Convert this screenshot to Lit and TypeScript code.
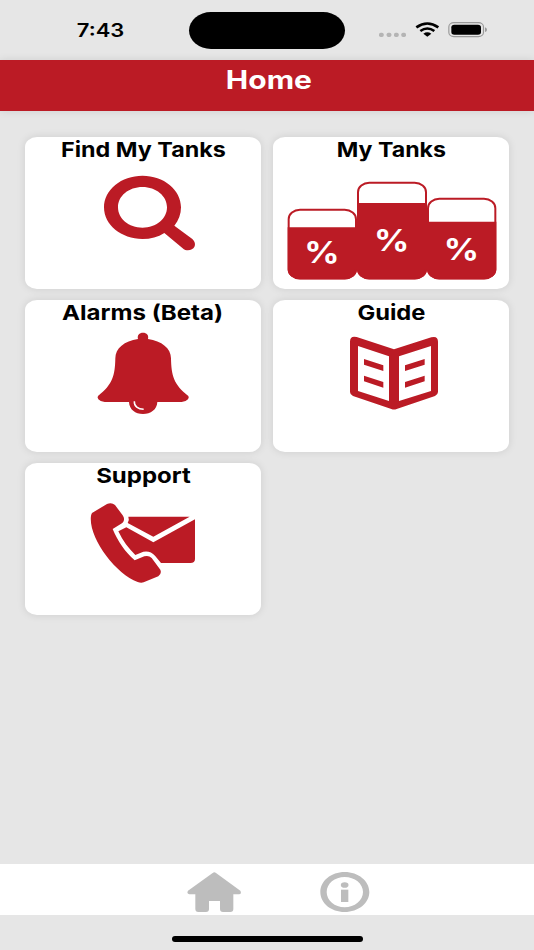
import { LitElement, html, css, svg } from "lit";
import { customElement, property } from "lit/decorators.js";

const RED = "#bb1b25";

const searchIcon = svg`
  <path fill=${RED} fill-rule="evenodd" d="M382.500 152C446 152 498 194 498 247C498 267 491 286 478 302L532 342C551 360 533 381 511 375Q506 373 503 370L448 324C429 336 407 342 382.500 342C319 342 267 300 267 247S319 152 382.500 152ZM382.500 186C341 186 309 213 309 247S341 308 382.500 308S456 281 456 247S423 186 382.500 186Z"/>`;

const tank = (x: number, y: number, w: number, level: number, textY: number) => svg`
  <path fill=${RED} d="M${x} ${level}H${x + w}V434A36 30 0 0 1 ${x + w - 36} 463H${x + 36}A36 30 0 0 1 ${x} 434Z"/>
  <rect x=${x + 3} y=${y + 2.5} width=${w - 6} height=${458 - y} rx="34" ry="28" fill="none" stroke=${RED} stroke-width="6"/>
  <text x=${x + w / 2 - 1} y=${textY} text-anchor="middle" textLength="106" lengthAdjust="spacingAndGlyphs"
    font-family="Inter, sans-serif" font-weight="700" font-size="88" fill="#fff">%</text>`;

const tanksIcon = svg`${tank(68, 252, 208, 307, 413)}${tank(276, 171, 210, 234, 377)}${tank(486, 219, 208, 290, 405)}`;

const bellIcon = svg`
  <path fill=${RED} d="M369 132C366 120 373 113 384 113S402 120 399 132C440 138 468 160 468 190C469 241 476 269 520 303Q523 307 519 313Q512 321 500 321H427C426 344 407 357 384 357S343 344 342 321H269Q257 321 250 313Q246 307 249 303C293 269 300 241 301 190C301 160 328 138 369 132Z"/>
  <path d="M358 319C357 334 369 343 386 343" fill="none" stroke="#fff" stroke-width="4.500"/>`;

const bookIcon = svg`
  <path fill=${RED} fill-rule="evenodd" d="M275 126L387 163L499 127Q519 122 519 140V291Q519 298 510 303L395 342Q387 345 379 342L264 303Q255 299 255 291V140Q255 121 275 126ZM279 153V288L372 318V184ZM498 153L402 184V318L498 288Z"/>
  <path fill=${RED} d="M297 192L355 211V228L297 209ZM297 242L355 261V278L297 259ZM479 192L420 211V228L479 209ZM479 242L420 261V278L479 259Z"/>`;

const supportIcon = svg`
  <path fill=${RED} d="M340 185H524L415 245L338 204Q344 195 340 185ZM310 229L334 217L415 262L540 193V312Q540 324 526 324H438L420 302Q406 286 385 290L361 300C341 281 323 257 310 229Z"/>
  <path fill=${RED} d="M231 174L276 147Q290 141 300 150L323 181Q332 194 322 204L293 222C308 258 330 291 359 316L388 304Q401 300 410 309L436 344Q441 356 430 364L386 382Q378 385 368 381C301 357 219 247 228 182Q229 177 231 174Z"/>`;

@customElement("menu-card")
class MenuCard extends LitElement {
  @property() label = "";
  @property({ type: Number }) stretch = 1.2;
  @property() view = "";
  @property({ attribute: false }) icon: unknown;

  static styles = css`
    :host { display: flex; flex-direction: column; overflow: hidden; background: #fff;
      border-radius: 12px / 10px; box-shadow: 0 0 8px rgba(0, 0, 0, .11); }
    .label { flex: none; height: 25px; line-height: 25px; text-align: center; white-space: nowrap;
      font-size: 20.500px; font-weight: 700; color: #000; }
    .text { display: inline-block; }
    svg { display: block; flex: none; width: 100%; height: 127.3px; }
  `;

  render() {
    return html`<div class="label"><span class="text" style="transform:scaleX(${this.stretch})">${this.label}</span></div>
      <svg viewBox=${this.view} preserveAspectRatio="none">${this.icon}</svg>`;
  }
}

@customElement("app-root")
class AppRoot extends LitElement {
  static styles = css`
    :host { display: flex; flex-direction: column; width: 534px; height: 950px; overflow: hidden;
      background: #e6e6e6; font-family: Inter, "Noto Sans", sans-serif; }
    .status { flex: none; height: 60.3px; display: grid; grid-template-columns: 189px 156px 1fr; }
    .time { padding: 21px 0 0 12px; height: 20px; line-height: 20px; text-align: center; font-size: 18px; font-weight: 600; }
    .time span { display: inline-block; transform: scaleX(1.22); }
    .island { height: 37px; margin-top: 12px; border-radius: 22px / 18.5px; background: #000; }
    .signals { display: block; width: 189px; height: 60px; }
    .header { flex: none; height: 50.7px; background: #bb1b25; color: #fff; text-align: center;
      box-shadow: 0 0 8px rgba(0, 0, 0, .1); }
    .title { margin: 0; padding-left: 4px; font-size: 25px; line-height: 41px; font-weight: 700; }
    .title span { display: inline-block; transform: scaleX(1.2); }
    .cards { flex: 1; display: grid; grid-template-columns: 236px 236px; grid-auto-rows: 152.4px;
      gap: 10.6px 12px; padding: 26px 25px 0; align-content: start; }
    .nav { flex: none; height: 51px; display: flex; background: #fff; }
    .nav svg { display: block; width: 534px; height: 51px; }
    .bottom { flex: none; height: 35px; display: flex; justify-content: center; }
    .indicator { width: 191px; height: 5.5px; margin-top: 21px; border-radius: 3px; background: #000; }
  `;

  render() {
    return html`
      <div class="status">
        <div class="time"><span>7:43</span></div>
        <div class="island"></div>
        <svg class="signals" viewBox="234 0 567 180">
          <g fill="#b4b4b4"><rect x="336" y="98" width="14" height="13" rx="5"/><rect x="359" y="98" width="14" height="13" rx="5"/><rect x="381" y="98" width="14" height="13" rx="5"/><rect x="403" y="98" width="14" height="13" rx="5"/></g>
          <g fill="none" stroke="#000" stroke-width="8"><path d="M448 82Q481 59 514 82"/><path d="M460 93Q481 78 502 93"/></g>
          <path d="M469 101Q481 93 493 101L481 110Z"/>
          <rect x="545.500" y="68" width="104" height="42" rx="15" ry="13" fill="none" stroke="#999" stroke-width="3.500"/>
          <rect x="553" y="74" width="89" height="30" rx="9" ry="8"/>
          <path d="M654 82Q660 84 660 89T654 96Z" fill="#999"/>
        </svg>
      </div>
      <header class="header"><h1 class="title"><span>Home</span></h1></header>
      <main class="cards">
        <menu-card label="Find My Tanks" stretch="1.138" view="30 111 708 382" .icon=${searchIcon}></menu-card>
        <menu-card label="My Tanks" stretch="1.13" view="24 111 708 382" .icon=${tanksIcon}></menu-card>
        <menu-card label="Alarms (Beta)" stretch="1.175" view="30 90 708 382" .icon=${bellIcon}></menu-card>
        <menu-card label="Guide" stretch="1.155" view="24 90 708 382" .icon=${bookIcon}></menu-card>
        <menu-card label="Support" stretch="1.17" view="30 99 708 382" .icon=${supportIcon}></menu-card>
      </main>
      <nav class="nav">
        <svg viewBox="-480 27 1602 153">
          <path fill="#bdbdbd" d="M158 54Q163 50 168 54L241 107Q246 116 237 118H220V162Q220 171 211 171H189Q180 171 180 162V138H147V162Q147 171 138 171H115Q106 171 106 162V118H88Q79 115 84 107Z"/>
          <path fill="#bdbdbd" fill-rule="evenodd" d="M554 51C595 51 628 78 628 111S595 171 554 171S481 144 481 111S513 51 554 51ZM554 66C524 66 500 86 500 111S524 157 554 157S609 136 609 111S584 66 554 66Z"/>
          <ellipse cx="554" cy="90" rx="11.500" ry="8.500" fill="#bdbdbd"/><rect x="543" y="104" width="22" height="37" fill="#bdbdbd"/>
        </svg>
      </nav>
      <div class="bottom"><div class="indicator"></div></div>`;
  }
}
